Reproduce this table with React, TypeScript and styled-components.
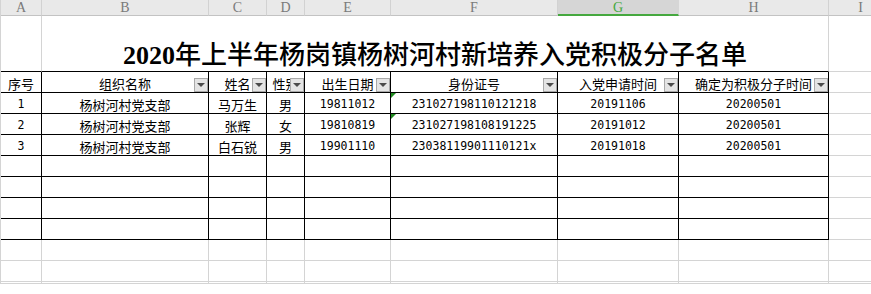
import React from "react";
import styled, { createGlobalStyle } from "styled-components";

const GlobalStyle = createGlobalStyle`
  html, body {
    margin: 0;
    padding: 0;
    background: #ffffff;
    overflow: hidden;
  }
`;

const INK = "#000000";
const GRID = "#d4d4d4";

const Page = styled.div`
  width: 871px;
  height: 294px;
  overflow: hidden;
`;

const Sheet = styled.div`
  display: grid;
  width: 893px;
  grid-template-columns: 41px 167px 58px 38px 86px 167px 121px 150px 64px;
  grid-template-rows: 16px 56px repeat(10, 21px);
  border-left: 1px solid ${GRID};
  font-family: "Noto Sans CJK SC", sans-serif;
  font-size: 13px;
  color: #000;
`;

const ColHead = styled.div<{ $active?: boolean }>`
  display: flex;
  align-items: center;
  justify-content: center;
  background: ${(p) => (p.$active ? "#d6d6d6" : "#e9e9e9")};
  border-right: 1px solid ${(p) => (p.$active ? "#d6d6d6" : "#d2d2d2")};
  border-bottom: ${(p) => (p.$active ? "2px solid #45a83f" : "1px solid #c3c3c3")};
  color: ${(p) => (p.$active ? "#45a83f" : "#7a7a7a")};
  font-family: "Liberation Serif", serif;
  font-size: 14px;
  line-height: 1;
  padding-top: 1px;
`;

type Line = "ink" | "grid";

const Cell = styled.div<{
  $right?: Line;
  $bottom?: Line;
  $span?: number;
  $num?: boolean;
  $flag?: boolean;
}>`
  position: relative;
  display: flex;
  align-items: flex-end;
  justify-content: center;
  min-width: 0;
  overflow: hidden;
  white-space: nowrap;
  grid-column: ${(p) => (p.$span ? `span ${p.$span}` : "auto")};
  border-right: 1px solid ${(p) => (p.$right === "ink" ? INK : GRID)};
  border-bottom: 1px solid ${(p) => (p.$bottom === "ink" ? INK : GRID)};
  font-family: ${(p) =>
    p.$num ? '"DejaVu Sans Mono", monospace' : '"Noto Sans CJK SC", sans-serif'};
  font-size: ${(p) => (p.$num ? "11.5px" : "13px")};
  line-height: 15px;
  padding-bottom: 1px;

  &::before {
    content: "";
    display: ${(p) => (p.$flag ? "block" : "none")};
    position: absolute;
    left: 0;
    top: 0;
    border-top: 5px solid #1f8a1f;
    border-right: 5px solid transparent;
  }
`;

const Title = styled(Cell)`
  font-family: "Liberation Serif", "Noto Sans CJK SC", serif;
  font-size: 26px;
  font-weight: 500;
  line-height: 30px;
  padding-bottom: 0;

  b {
    font-weight: 700;
  }
`;

const FilterButton = styled.span`
  position: absolute;
  right: 0;
  bottom: 0;
  width: 14px;
  height: 14px;
  box-sizing: border-box;
  display: flex;
  align-items: center;
  justify-content: center;
  background: #e4e4e4;
  border: 1px solid #a9a9a9;

  &::after {
    content: "";
    border-top: 4px solid #4a4a4a;
    border-left: 4px solid transparent;
    border-right: 4px solid transparent;
  }
`;

const letters = ["A", "B", "C", "D", "E", "F", "G", "H", "I"];

const headers: { label: string; filter: boolean }[] = [
  { label: "序号", filter: false },
  { label: "组织名称", filter: true },
  { label: "姓名", filter: true },
  { label: "性别", filter: true },
  { label: "出生日期", filter: true },
  { label: "身份证号", filter: true },
  { label: "入党申请时间", filter: true },
  { label: "确定为积极分子时间", filter: true },
];

interface Member {
  no: string;
  org: string;
  name: string;
  sex: string;
  birth: string;
  id: string;
  applied: string;
  confirmed: string;
  flagged: boolean;
}

const members: Member[] = [
  {
    no: "1",
    org: "杨树河村党支部",
    name: "马万生",
    sex: "男",
    birth: "19811012",
    id: "231027198110121218",
    applied: "20191106",
    confirmed: "20200501",
    flagged: true,
  },
  {
    no: "2",
    org: "杨树河村党支部",
    name: "张辉",
    sex: "女",
    birth: "19810819",
    id: "231027198108191225",
    applied: "20191012",
    confirmed: "20200501",
    flagged: true,
  },
  {
    no: "3",
    org: "杨树河村党支部",
    name: "白石锐",
    sex: "男",
    birth: "19901110",
    id: "23038119901110121x",
    applied: "20191018",
    confirmed: "20200501",
    flagged: false,
  },
];

const blankInTable = 4;
const blankBelow = 3;

const App: React.FC = () => {
  return (
    <Page>
      <GlobalStyle />
      <Sheet>
        {letters.map((l) => (
          <ColHead key={l} $active={l === "G"}>
            {l}
          </ColHead>
        ))}

        <Cell $right="grid" $bottom="ink" />
        <Title $span={7} $right="grid" $bottom="ink">
          <b>2020</b>年上半年杨岗镇杨树河村新培养入党积极分子名单
        </Title>
        <Cell $right="grid" $bottom="grid" />

        {headers.map((h) => (
          <Cell key={h.label} $right="ink" $bottom="ink">
            {h.label}
            {h.filter && <FilterButton />}
          </Cell>
        ))}
        <Cell $bottom="grid" />

        {members.map((m) => (
          <React.Fragment key={m.no}>
            <Cell $right="ink" $bottom="ink" $num>
              {m.no}
            </Cell>
            <Cell $right="ink" $bottom="ink">
              {m.org}
            </Cell>
            <Cell $right="ink" $bottom="ink">
              {m.name}
            </Cell>
            <Cell $right="ink" $bottom="ink">
              {m.sex}
            </Cell>
            <Cell $right="ink" $bottom="ink" $num>
              {m.birth}
            </Cell>
            <Cell $right="ink" $bottom="ink" $num $flag={m.flagged}>
              {m.id}
            </Cell>
            <Cell $right="ink" $bottom="ink" $num>
              {m.applied}
            </Cell>
            <Cell $right="ink" $bottom="ink" $num>
              {m.confirmed}
            </Cell>
            <Cell $bottom="grid" />
          </React.Fragment>
        ))}

        {Array.from({ length: blankInTable }).map((_, r) => (
          <React.Fragment key={`t${r}`}>
            {headers.map((h) => (
              <Cell key={h.label} $right="ink" $bottom="ink" />
            ))}
            <Cell $bottom="grid" />
          </React.Fragment>
        ))}

        {Array.from({ length: blankBelow }).map((_, r) => (
          <React.Fragment key={`b${r}`}>
            {letters.map((l) => (
              <Cell key={l} $bottom="grid" />
            ))}
          </React.Fragment>
        ))}
      </Sheet>
    </Page>
  );
};

export default App;
